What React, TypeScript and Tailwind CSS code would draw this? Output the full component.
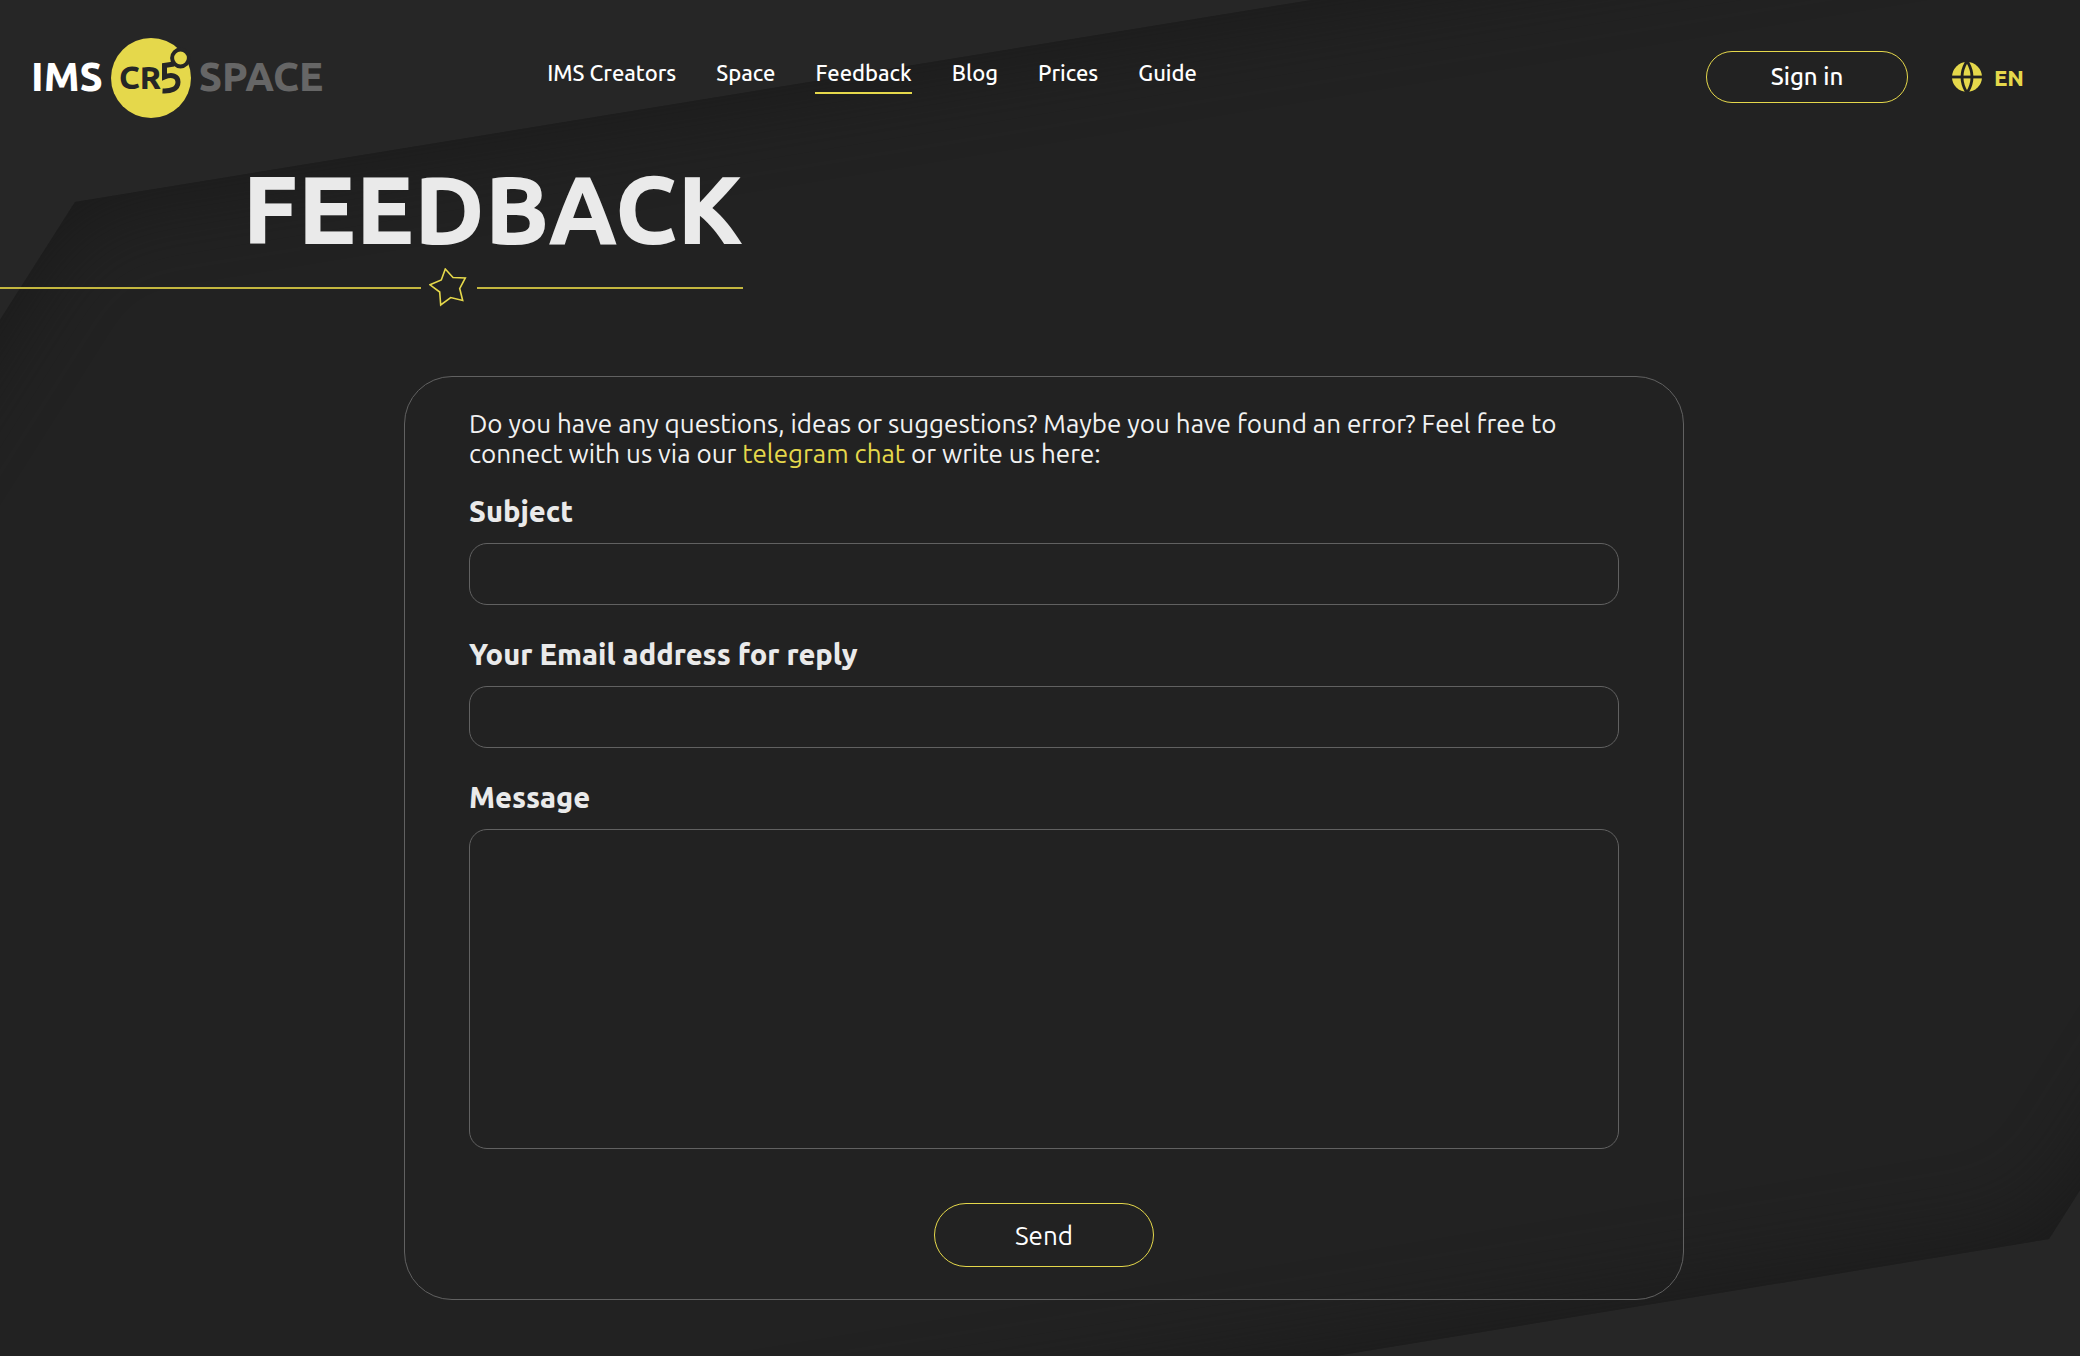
const links = ["IMS Creators", "Space", "Feedback", "Blog", "Prices", "Guide"];

function Backdrop() {
  return (
    <svg
      className="absolute inset-0 -z-10 h-full w-full"
      viewBox="0 0 2080 1356"
      preserveAspectRatio="none"
      aria-hidden="true"
    >
      <defs>
        <filter id="soft" x="-10%" y="-10%" width="120%" height="120%" colorInterpolationFilters="sRGB">
          <feGaussianBlur stdDeviation="50" />
        </filter>
        <clipPath id="plate">
          <polygon points="75,202 1312,0 2600,-210 2600,370 2049,1239 1335,1356 -600,1670 -600,1265" />
        </clipPath>
      </defs>
      <rect width="2080" height="1356" fill="#262626" />
      <g clipPath="url(#plate)">
        <rect width="2080" height="1356" fill="#191919" />
        <polygon
          points="75,202 1312,0 2600,-210 2600,370 2049,1239 1335,1356 -600,1670 -600,1265"
          fill="#222222"
          filter="url(#soft)"
        />
      </g>
    </svg>
  );
}

function Logo() {
  return (
    <a href="#" className="flex items-center gap-2 text-[40px] leading-none font-extrabold" aria-label="IMS CR5 SPACE">
      <span className="pb-0.5 text-white">IMS</span>
      <svg width="80" height="80" viewBox="0 0 80 80" aria-hidden="true">
        <circle cx="40" cy="40" r="40" fill="#e5d84b" />
        <text x="8" y="51" fontSize="32" fill="#262626">
          CR
        </text>
        <path
          d="M63 26L53.5 27.5V39C61 36 67 38 67 44C67 51 60 53.5 51.5 53"
          fill="none"
          stroke="#262626"
          strokeWidth="5"
        />
        <circle cx="69.5" cy="20" r="8.4" fill="#e5d84b" stroke="#262626" strokeWidth="4" />
      </svg>
      <span className="pb-0.5 text-[#666666]">SPACE</span>
    </a>
  );
}

function GlobeIcon() {
  return (
    <svg width="30" height="30" viewBox="0 0 30 30" aria-hidden="true">
      <circle cx="15" cy="15" r="15" fill="#e5d84b" />
      <g fill="none" stroke="#222222" strokeWidth="2.8">
        <path d="M0 15h30" />
        <path d="M15 -1Q5 15 15 31M15 -1Q25 15 15 31" />
      </g>
    </svg>
  );
}

function Header() {
  return (
    <header className="flex items-start justify-between pt-[38px] pr-14 pl-[31px]">
      <div className="flex items-start">
        <Logo />
        <nav className="ml-56 flex gap-10 pt-[21px] text-[22px] leading-7 font-medium text-white">
          {links.map((link) => (
            <a
              key={link}
              href="#"
              className={link === "Feedback" ? "border-b-2 border-[#e5d84b] pb-[5px]" : "pb-[5px]"}
            >
              {link}
            </a>
          ))}
        </nav>
      </div>
      <div className="flex items-center gap-11 pt-[13px]">
        <button
          type="button"
          className="h-[52px] w-[202px] rounded-full border border-[#e5d84b] text-2xl font-medium text-white"
        >
          Sign in
        </button>
        <button type="button" className="flex items-center gap-3 text-[22px] font-extrabold text-[#e5d84b]">
          <GlobeIcon />
          EN
        </button>
      </div>
    </header>
  );
}

function Title() {
  return (
    <div className="w-[743px]">
      <h1 className="mb-0.5 text-right text-8xl leading-[114px] font-extrabold text-[#eaeaea]">FEEDBACK</h1>
      <div className="flex items-center">
        <span className="h-0.5 flex-1 bg-[#c4b73f]" />
        <svg className="mx-2 h-10 w-10" viewBox="0 0 40 40" fill="none" stroke="#e5d84b" strokeWidth="1.6" aria-hidden="true">
          <path d="M16.3 1L24 9.5L36.3 10L30.7 20.5L33.7 32.5L21.7 29.5L11.7 37L10.7 24L1 16.8L12.3 12Z" />
        </svg>
        <span className="h-0.5 w-[266px] bg-[#c4b73f]" />
      </div>
    </div>
  );
}

const labelClass = "mb-3 block text-[29px] leading-10 font-extrabold text-[#eaeaea]";
const fieldClass =
  "block w-full rounded-[18px] border border-[#616161] bg-transparent px-5 text-2xl text-white outline-none";

function FeedbackForm() {
  return (
    <form className="mx-auto w-full max-w-[1280px] rounded-[48px] border border-[#616161] px-16 py-8">
      <p className="mb-[22px] text-[26px] leading-[30px] text-[#f2f2f2]">
        Do you have any questions, ideas or suggestions? Maybe you have found an error? Feel free to connect with us
        via our{" "}
        <a href="#" className="text-[#e5d84b]">
          telegram chat
        </a>{" "}
        or write us here:
      </p>
      <label htmlFor="subject" className={labelClass}>
        Subject
      </label>
      <input id="subject" type="text" className={`${fieldClass} mb-[29px] h-[62px]`} />
      <label htmlFor="email" className={labelClass}>
        Your Email address for reply
      </label>
      <input id="email" type="email" className={`${fieldClass} mb-[29px] h-[62px]`} />
      <label htmlFor="message" className={labelClass}>
        Message
      </label>
      <textarea id="message" className={`${fieldClass} h-80 resize-none py-4`} />
      <button
        type="submit"
        className="mx-auto mt-[54px] block h-16 w-[220px] rounded-full border border-[#e5d84b] text-[26px] text-white"
      >
        Send
      </button>
    </form>
  );
}

export default function App() {
  return (
    <div className="relative isolate min-h-screen overflow-hidden font-['Ubuntu','Noto_Sans',sans-serif]">
      <Backdrop />
      <Header />
      <main className="pt-[34px] pb-12">
        <Title />
        <div className="mt-[68px] pl-2">
          <FeedbackForm />
        </div>
      </main>
    </div>
  );
}
